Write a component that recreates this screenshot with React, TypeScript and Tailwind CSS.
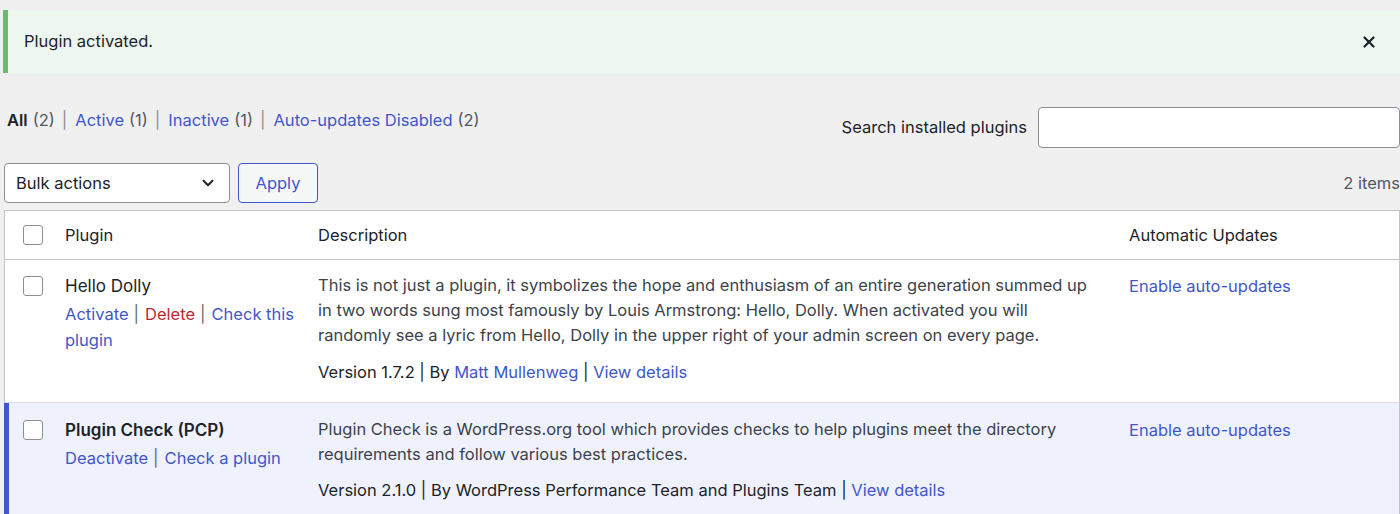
import React from 'react';
import { X, ChevronDown } from 'lucide-react';

const link = 'text-[#3f57c9]';

const Checkbox = () => (
  <span className="block w-[20px] h-[20px] rounded-[3px] border border-[#8c8f94] bg-white" />
);

const Sep = () => <span className="text-[#8c8f94] ml-[7px] mr-[8px]">|</span>;

const Pipe = () => <span className="text-[#646970] ml-[5px] mr-[6px]">|</span>;

const filters = [
  { label: 'All', count: 2, current: true },
  { label: 'Active', count: 1 },
  { label: 'Inactive', count: 1 },
  { label: 'Auto-updates Disabled', count: 2 },
];

const App: React.FC = () => {
  return (
    <div
      className="w-[1400px] h-[514px] overflow-hidden bg-[#f0f0f1] text-[#1d2327] text-[16.5px] pl-[4px]"
      style={{ fontFamily: 'Inter, "Noto Sans", sans-serif' }}
    >
      {/* notice */}
      <div className="mt-[10px] -ml-[1px] h-[63px] flex items-center justify-between border-l-[5px] border-[#6cb86f] bg-[#eef7ef] pl-[16px] pr-[22px]">
        <span>Plugin activated.</span>
        <X size={18} strokeWidth={3} className="text-[#1d2327]" />
      </div>

      {/* filters + search */}
      <div className="flex justify-between items-start mt-[34px]">
        <div className="flex items-center pl-[3px] h-[26px] text-[#50575e]">
          {filters.map((f, i) => (
            <span key={f.label} className="flex items-center">
              {i > 0 && <Sep />}
              <span className={f.current ? 'font-semibold text-[#1d2327]' : link}>{f.label}</span>
              <span className="ml-[5px]">({f.count})</span>
            </span>
          ))}
        </div>
        <div className="flex items-center">
          <span className="mr-[11px]">Search installed plugins</span>
          <div className="w-[362px] h-[41px] rounded-[4px] border border-[#8c8f94] bg-white" />
        </div>
      </div>

      {/* bulk actions */}
      <div className="flex items-center justify-between mt-[15px]">
        <div className="flex items-center gap-[8px]">
          <div className="w-[226px] h-[40px] rounded-[4px] border border-[#8c8f94] bg-white flex items-center justify-between pl-[11px] pr-[12px]">
            <span>Bulk actions</span>
            <ChevronDown size={18} strokeWidth={2.5} />
          </div>
          <div className={`w-[80px] h-[40px] rounded-[4px] border border-[#3f57c9] bg-[#f6f7f7] flex items-center justify-center ${link}`}>
            Apply
          </div>
        </div>
        <span className="text-[#50575e]">2 items</span>
      </div>

      {/* table */}
      <div className="mt-[7px] border border-[#c3c4c7] bg-white">
        <div className="flex h-[49px] items-center border-b border-[#c3c4c7]">
          <div className="w-[60px] pl-[18px]"><Checkbox /></div>
          <div className="w-[253px]">Plugin</div>
          <div className="w-[811px]">Description</div>
          <div>Automatic Updates</div>
        </div>

        {/* Hello Dolly */}
        <div className="flex h-[143px] pt-[13px] border-b border-[#dcdcde]">
          <div className="w-[60px] pl-[18px] pt-[3px]"><Checkbox /></div>
          <div className="w-[253px] pr-[14px]">
            <div className="text-[17px] leading-[26px]">Hello Dolly</div>
            <div className="leading-[26px] mt-[2px]">
              <span className={link}>Activate</span>
              <Pipe />
              <span className="text-[#b32d2e]">Delete</span>
              <Pipe />
              <span className={link}>Check this</span>
              <br />
              <span className={link}>plugin</span>
            </div>
          </div>
          <div className="w-[811px] text-[#3c434a]">
            <p className="leading-[25px]">
              This is not just a plugin, it symbolizes the hope and enthusiasm of an entire generation summed up<br />
              in two words sung most famously by Louis Armstrong: Hello, Dolly. When activated you will<br />
              randomly see a lyric from Hello, Dolly in the upper right of your admin screen on every page.
            </p>
            <p className="leading-[25px] mt-[12px] text-[#1d2327]">
              Version 1.7.2 | By <span className={link}>Matt Mullenweg</span> | <span className={link}>View details</span>
            </p>
          </div>
          <div className={`leading-[26px] ${link}`}>Enable auto-updates</div>
        </div>

        {/* Plugin Check */}
        <div className="flex h-[120px] pt-[14px] bg-[#eff2fc] border-l-[5px] border-[#3f57c9] -ml-[1px]">
          <div className="w-[56px] pl-[14px] pt-[3px]"><Checkbox /></div>
          <div className="w-[253px] pr-[14px]">
            <div className="text-[17px] leading-[26px] font-semibold">Plugin Check (PCP)</div>
            <div className="leading-[26px] mt-[2px]">
              <span className={link}>Deactivate</span>
              <Pipe />
              <span className={link}>Check a plugin</span>
            </div>
          </div>
          <div className="w-[811px] text-[#3c434a]">
            <p className="leading-[25px]">
              Plugin Check is a WordPress.org tool which provides checks to help plugins meet the directory<br />
              requirements and follow various best practices.
            </p>
            <p className="leading-[25px] mt-[11px] text-[#1d2327]">
              Version 2.1.0 | By WordPress Performance Team and Plugins Team | <span className={link}>View details</span>
            </p>
          </div>
          <div className={`leading-[26px] ${link}`}>Enable auto-updates</div>
        </div>
      </div>
    </div>
  );
};

export default App;
